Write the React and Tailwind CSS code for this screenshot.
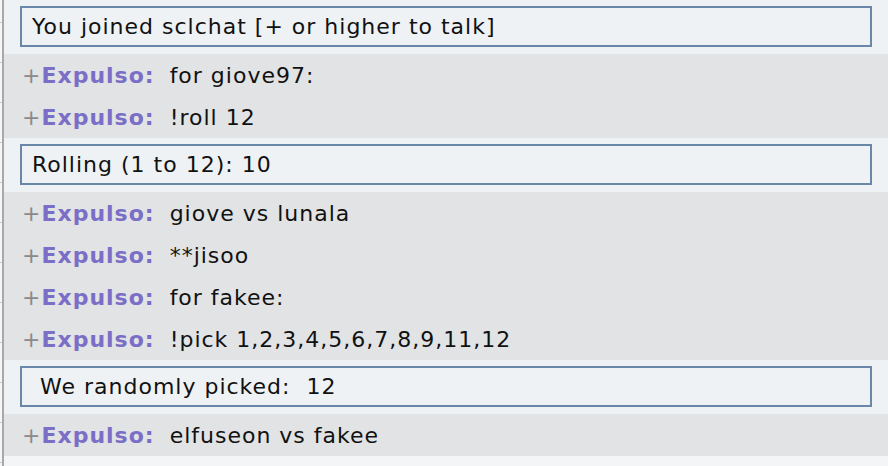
const lines = [
  { type: 'box', text: 'You joined sclchat [+ or higher to talk]' },
  { type: 'msg', text: 'for giove97:' },
  { type: 'msg', text: '!roll 12' },
  { type: 'box', text: 'Rolling (1 to 12): 10' },
  { type: 'msg', text: 'giove vs lunala' },
  { type: 'msg', text: '**jisoo' },
  { type: 'msg', text: 'for fakee:' },
  { type: 'msg', text: '!pick 1,2,3,4,5,6,7,8,9,11,12' },
  { type: 'box', text: '\u00a0We randomly picked: \u00a012' },
  { type: 'msg', text: 'elfuseon vs fakee' },
];

function InfoBox({ text }) {
  return (
    <div className="bg-[#eff2f4] pt-[6px] pb-[7px] px-4">
      <div className="h-[41px] border-2 border-[#6a86a9] flex items-center pl-[10px] text-[#111]">
        {text}
      </div>
    </div>
  );
}

function ChatLine({ text }) {
  return (
    <div className="h-[42px] bg-[#e1e3e4] flex items-center pl-[18px] text-[#111]">
      <span className="text-[#8a8a8a]">+</span>
      <strong className="font-bold text-[#7a6ec7]">Expulso:</strong>
      <span className="ml-[15px]">{text}</span>
    </div>
  );
}

export default function App() {
  return (
    <div
      className="w-[888px] h-[466px] overflow-hidden flex bg-[#f3f5f6] text-[22px] tracking-[1px] whitespace-pre"
      style={{ fontFamily: '"DejaVu Sans", Verdana, sans-serif' }}
    >
      <div className="w-[2px] bg-[#f6f6f6] flex flex-col pt-[22px]">
        {Array.from({ length: 12 }).map((_, i) => (
          <div key={i} className="h-10 shrink-0 border-t border-[#c9c9c9]" />
        ))}
      </div>
      <div className="w-[2px] bg-[#a8a8a8]" />
      <div className="flex-1 flex flex-col">
        {lines.map((l, i) =>
          l.type === 'box' ? <InfoBox key={i} text={l.text} /> : <ChatLine key={i} text={l.text} />
        )}
      </div>
    </div>
  );
}
